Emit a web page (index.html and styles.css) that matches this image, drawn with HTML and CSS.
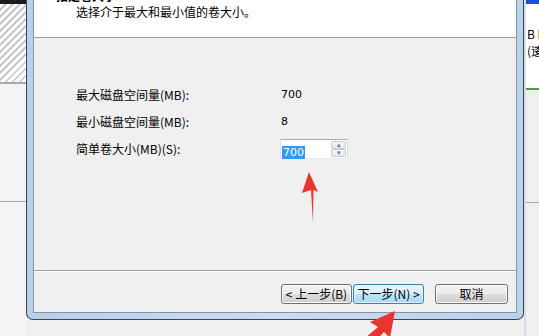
FILE: index.html
```html
<!DOCTYPE html>
<html lang="zh-CN">
<head>
  <meta charset="UTF-8" />
  <meta name="viewport" content="width=device-width, initial-scale=1.0" />
  <title>新建简单卷向导</title>
  <link rel="stylesheet" href="styles.css">
</head>
<body>
  <div class="screen">
    <div class="side side-left">
      <div class="topbar-dark"></div>
      <div class="hatch"></div>
      <div class="rule-low"></div>
    </div>

    <div class="dialog">
      <div class="client">
        <div class="header">
          <div class="title">指定卷大小</div>
          <div class="subtitle">选择介于最大和最小值的卷大小。</div>
        </div>

        <div class="body">
          <div class="fields">
            <div class="label">最大磁盘空间量(MB):</div>
            <div class="value">700</div>

            <div class="label">最小磁盘空间量(MB):</div>
            <div class="value">8</div>

            <div class="label">简单卷大小(MB)(S):</div>
            <div class="spin">
              <div class="spin-text"><span class="selected">700</span></div>
              <div class="spin-buttons">
                <button class="spin-btn">&#9652;</button>
                <button class="spin-btn">&#9662;</button>
              </div>
            </div>
          </div>
        </div>

        <div class="footer">
          <button class="btn">&lt; 上一步(B)</button>
          <button class="btn default">下一步(N) &gt;</button>
          <button class="btn cancel">取消</button>
        </div>
      </div>
    </div>

    <div class="side side-right">
      <div class="topbar-blue"></div>
      <div class="panel">
        <div class="panel-line">B I</div>
        <div class="panel-line">(逶</div>
      </div>
      <div class="rule-green"></div>
      <div class="rule-low right"></div>
    </div>
  </div>

  <!-- red annotation arrows drawn over the screenshot -->
  <svg class="annot" width="539" height="336" viewBox="0 0 539 336">
    <polygon points="309,172 318,192 313.5,190 313,223 311,190 302,193" fill="#e8352d"/>
    <polygon points="395,311 390,338 384,332 366,352 358,344 378,327 370,322" fill="#e8352d"/>
  </svg>
</body>
</html>
```

FILE: styles.css
```css
* {
  box-sizing: border-box;
}
body {
  margin: 0;
  width: 539px;
  height: 336px;
  overflow: hidden;
  position: relative;
  font-family: 'Noto Sans CJK SC', 'Liberation Sans', sans-serif;
  font-size: 12px;
  color: #000;
  background: #f0f0f0;
}
.screen {
  display: flex;
  height: 336px;
}

/* windows behind the dialog */
.side {
  display: flex;
  flex-direction: column;
}
.side-left {
  width: 26px;
  background: #f4f4f4;
}
.topbar-dark {
  height: 4px;
  background: #1c1c1c;
}
.hatch {
  height: 80px;
  background: repeating-linear-gradient(135deg, #ffffff 0 3px, #c9c9c9 3px 5px);
  border-bottom: 2px solid #a9a9a9;
}
.rule-low {
  margin-top: 117px;
  height: 1px;
  background: #a8a8a8;
}
.side-right {
  width: 15px;
  background: #f0f0f0;
  border-left: 2px solid #d8dde4;
}
.topbar-blue {
  height: 4px;
  background: #1b4fd8;
}
.panel {
  height: 84px;
  background: #fff;
  padding: 21px 0 0 1px;
  line-height: 17px;
  white-space: nowrap;
  overflow: hidden;
}
.rule-green {
  height: 2px;
  background: #4a9a4a;
}
.rule-low.right {
  margin-top: 112px;
}

/* dialog frame */
.dialog {
  width: 498px;
  height: 320px;
  border: 1px solid #34465c;
  border-top: 0;
  border-radius: 0 0 7px 7px;
  background: linear-gradient(90deg, #b9d0ea, #cadcf1 50%, #bcd2eb);
  padding: 0 6px 6px;
}
.client {
  height: 100%;
  display: flex;
  flex-direction: column;
  background: #f0f0f0;
  border: 1px solid #7f93ab;
  border-top: 0;
}
.header {
  height: 38px;
  background: #fff;
  border-bottom: 1px solid #a0a0a0;
  padding-left: 22px;
  overflow: hidden;
}
.title {
  margin-top: -11px;
  height: 14px;
  line-height: 14px;
  font-weight: bold;
}
.subtitle {
  margin: 2px 0 0 20px;
  line-height: 14px;
}
.body {
  flex: 1;
  padding: 47px 0 0 42px;
}
.fields {
  display: grid;
  grid-template-columns: 204px auto;
  grid-auto-rows: 20px;
  row-gap: 7px;
  align-items: center;
}
.label,
.value {
  line-height: 14px;
}
.value {
  padding-left: 1px;
  font-family: 'DejaVu Sans', sans-serif;
  font-size: 11px;
}

/* spin box */
.spin {
  display: flex;
  width: 68px;
  height: 20px;
  background: #fff;
  border: 1px solid #abadb3;
  border-color: #abadb3 #dbdfe6 #e3e9ef #e2e3ea;
}
.spin-text {
  flex: 1;
  padding: 2px 0 0 1px;
}
.selected {
  display: inline-block;
  background: #3399ff;
  color: #fff;
  font-family: 'DejaVu Sans', sans-serif;
  font-size: 11px;
  line-height: 13px;
  padding: 0 1px;
}
.spin-buttons {
  width: 16px;
  display: flex;
  flex-direction: column;
  padding: 1px 1px 1px 0;
}
.spin-btn {
  flex: 1;
  padding: 0;
  margin: 0;
  border: 1px solid #c5cbd3;
  border-radius: 2px;
  background: linear-gradient(#f6f7f8, #e4e7ea);
  color: #6c7480;
  font-size: 7px;
  line-height: 6px;
}

/* footer buttons */
.footer {
  height: 42px;
  display: flex;
  justify-content: flex-end;
  align-items: flex-start;
  padding: 13px 8px 0 0;
  border-top: 1px solid #a0a0a0;
  box-shadow: inset 0 1px 0 #ffffff;
}
.btn {
  width: 71px;
  height: 20px;
  margin: 0 0 0 1px;
  padding: 0;
  font-family: 'Noto Sans CJK SC', sans-serif;
  font-size: 12px;
  line-height: 16px;
  color: #000;
  border: 1px solid #707070;
  border-radius: 3px;
  background: linear-gradient(#f2f2f2 0%, #ebebeb 50%, #dddddd 50%, #cfcfcf 100%);
  box-shadow: inset 0 0 0 1px #fcfcfc;
}
.btn.default {
  border-color: #3c7fb1;
  background: linear-gradient(#eaf6fd 0%, #d9f0fc 50%, #bee6fd 50%, #a7d9f5 100%);
  box-shadow: inset 0 0 0 1px #dff2fd;
}
.btn.cancel {
  width: 73px;
  margin-left: 11px;
}

/* annotation layer */
.annot {
  position: absolute;
  top: 0;
  left: 0;
  pointer-events: none;
}
```
